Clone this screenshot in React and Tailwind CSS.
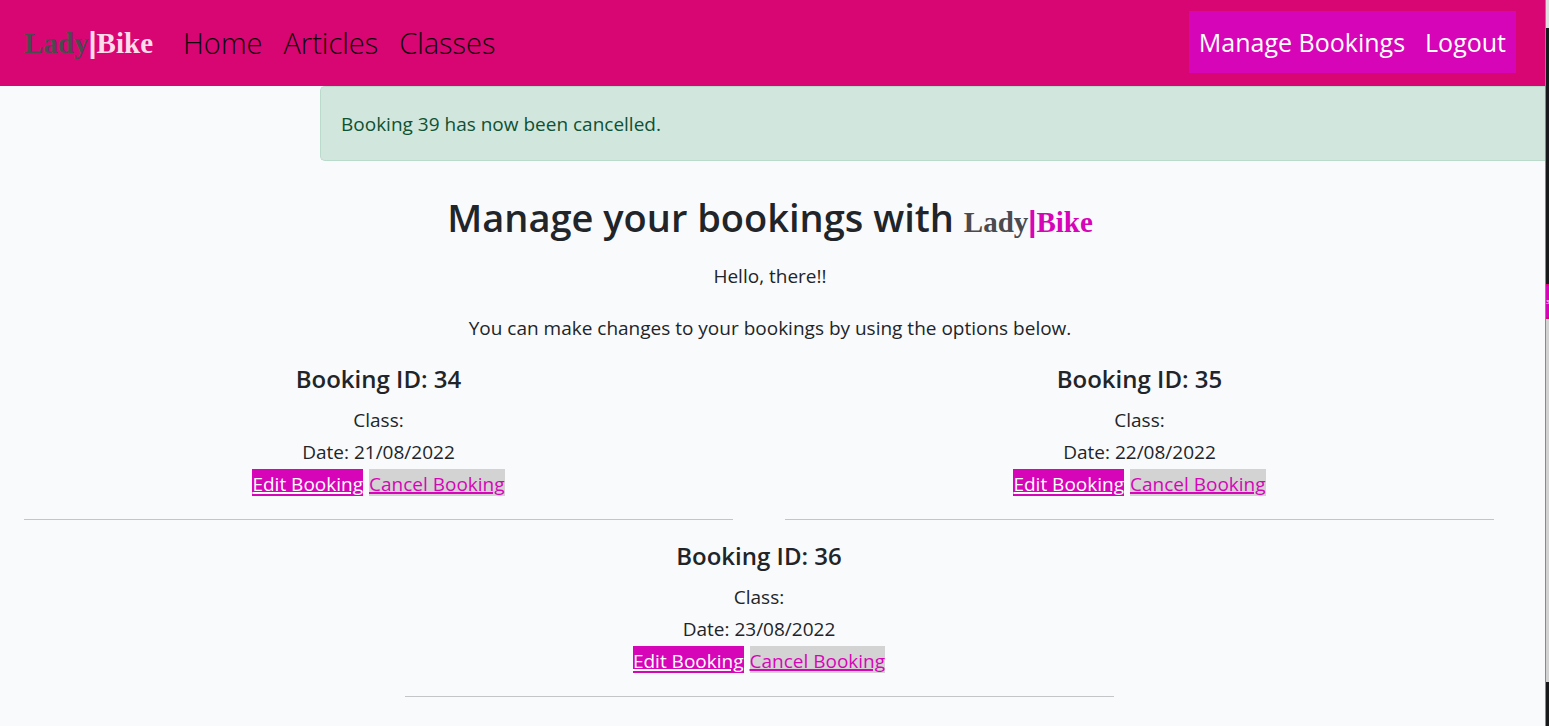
function Logo({ accent }) {
  return (
    <span className="font-['Liberation_Serif',serif] text-[29px] leading-9 font-bold whitespace-nowrap">
      <span className="text-[#4a4a4f]">Lady</span>
      <span className={accent}>
        <span className="font-['Liberation_Sans',sans-serif]">|</span>Bike
      </span>
    </span>
  );
}

const bookings = [
  { id: 34, date: "21/08/2022" },
  { id: 35, date: "22/08/2022" },
  { id: 36, date: "23/08/2022" },
];

function Booking({ id, date }) {
  return (
    <article className="w-[calc(50%-26px)] text-center">
      <h2 className="mb-[9px] text-[24px] leading-8 font-semibold">Booking ID: {id}</h2>
      <p>Class:</p>
      <p>Date: {date}</p>
      <div className="flex h-8 items-start justify-center gap-[6px] pt-px">
        <a href="#edit" className="h-[27px] bg-[#d605b8] leading-[30px] text-white underline decoration-2">
          Edit Booking
        </a>
        <a href="#cancel" className="h-[27px] bg-[#d3d3d3] leading-[30px] text-[#d605b8] underline decoration-2">
          Cancel Booking
        </a>
      </div>
      <hr className="mt-[19px] border-[#c3c5c8]" />
    </article>
  );
}

export default function App() {
  return (
    <div className="flex min-h-screen overflow-hidden bg-[#f9fafc] font-['Open_Sans',sans-serif] text-[19px] leading-8 text-[#212529]">
      <div className="min-w-0 flex-1">
        <header className="flex h-[86px] items-center justify-between bg-[#d80673] pr-[29px] pl-6">
          <nav className="flex items-center gap-[21px] text-[29px] font-light text-[#10000a]">
            <a href="#top" className="mr-[9px]">
              <Logo accent="text-[#ffdcea]" />
            </a>
            <a href="#home">Home</a>
            <a href="#articles">Articles</a>
            <a href="#classes">Classes</a>
          </nav>
          <nav className="mb-[2px] flex h-[62px] items-center gap-5 bg-[#d605b8] px-[10px] text-[25px] text-white">
            <a href="#bookings">Manage Bookings</a>
            <a href="#logout">Logout</a>
          </nav>
        </header>
        <div
          role="alert"
          className="ml-80 flex h-[75px] items-center rounded-l-[5px] border border-r-0 border-[#badbcc] bg-[#d1e7dd] px-5 text-[#0f5132]"
        >
          Booking 39 has now been cancelled.
        </div>
        <main className="pt-8 pr-[51px] pb-7 pl-6">
          <div className="ml-[22px] text-center">
            <h1 className="mb-[19px] text-[38px] leading-[48px] font-semibold">
              Manage your bookings with <Logo accent="text-[#d605b8]" />
            </h1>
            <p className="mb-5">Hello, there!!</p>
            <p className="mb-[19px]">You can make changes to your bookings by using the options below.</p>
          </div>
          <section className="flex flex-wrap justify-center gap-x-[52px] gap-y-5">
            {bookings.map((b) => (
              <Booking key={b.id} id={b.id} date={b.date} />
            ))}
          </section>
        </main>
      </div>
      <aside className="flex w-1 flex-col border-l border-[#8a8a8a] bg-[#18191b]">
        <div className="h-7 bg-[#dedede]" />
        <div className="h-64" />
        <div className="flex h-[35px] items-center border-y-2 border-[#d80673] bg-[#d605b8] text-[6px] text-white">
          3
        </div>
        <div className="h-[363px] bg-[#d3d3d3]" />
      </aside>
    </div>
  );
}
